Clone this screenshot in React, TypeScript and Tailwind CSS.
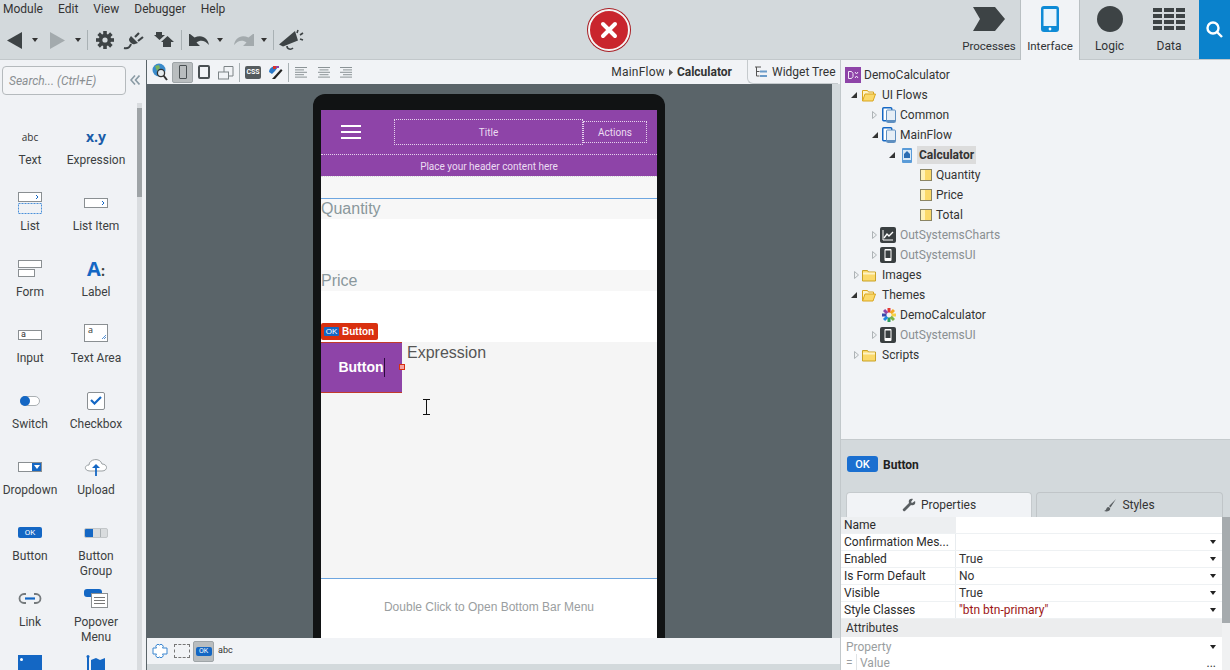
import React from "react";

const DK = "#3d4345";

const Caret = ({ c = "#333" }: { c?: string }) => (
  <svg width="6" height="4" viewBox="0 0 6 4"><path d="M0 0h6L3 4z" fill={c} /></svg>
);

const Sep = ({ h = "h-[20px]" }: { h?: string }) => <div className={`w-px bg-[#a9b1b4] ${h}`} />;

const Gear = () => (
  <svg width="18" height="18" viewBox="0 0 18 18">
    <g fill={DK}>
      <circle cx="9" cy="9" r="6.2" />
      {[0, 45, 90, 135, 180, 225, 270, 315].map((a) => (
        <rect key={a} x="7.2" y="0" width="3.6" height="4" transform={`rotate(${a} 9 9)`} />
      ))}
    </g>
    <circle cx="9" cy="9" r="2.6" fill="#d3d9dc" />
  </svg>
);

const Plug = () => (
  <svg width="22" height="19" viewBox="0 0 22 19" fill="none">
    <path d="M8 7l7 7-3 1c-2 .5-3 0-4-1s-2-2-2-4z" fill={DK} transform="translate(0 -2)" />
    <path d="M12 6l4-4M15 10l5-4" stroke={DK} strokeWidth="2.2" />
    <path d="M8 13c-1 3-3 5-7 4" stroke={DK} strokeWidth="2" />
  </svg>
);

const Merge = () => (
  <svg width="20" height="16" viewBox="0 0 20 16">
    <path d="M2 0h6v3h3L5.500 8 0 3h2z" fill={DK} />
    <path d="M13.500 4L20 10h-3v5H9v-5H7z" fill={DK} />
  </svg>
);

const Undo = ({ c = DK, flip = false }: { c?: string; flip?: boolean }) => (
  <svg width="21" height="15" viewBox="0 0 21 15" className={flip ? "-scale-x-100" : ""}>
    <path d="M0 1v12h11L7.500 9.500C11 6.500 16 7 20 12 19 5 13 1 5.500 4.500L1 1z" fill={c} />
  </svg>
);

const Mega = () => (
  <svg width="25" height="22" viewBox="0 0 25 22" fill="none">
    <path d="M0 15.500L16 2l3 9.500-15 6z" fill={DK} />
    <path d="M8 17c0 3.500 4 4 6 2" stroke={DK} strokeWidth="1.600" />
    <path d="M19 1l-1 3M21 6l3-2M21 10l3 1" stroke={DK} strokeWidth="1.600" />
  </svg>
);

const Globe = () => (
  <svg width="16" height="18" viewBox="0 0 16 18">
    <circle cx="7" cy="7" r="6.500" fill="#3a8bcc" />
    <path d="M3 3l4-1 1 3-3 3zM9 8l3 0-1 3-2 0z" fill="#7cb35a" />
    <circle cx="9" cy="10" r="3.600" fill="#e6ecef" stroke="#333" strokeWidth="1.300" />
    <path d="M11.500 12.500L15 17" stroke="#333" strokeWidth="2" />
  </svg>
);

const Align = ({ kind }: { kind: "l" | "c" | "r" }) => {
  const ws = [12, 9, 12, 9, 12];
  return (
    <svg width="12" height="11" viewBox="0 0 12 11">
      {ws.map((w, i) => (
        <rect key={i} x={kind === "l" ? 0 : kind === "c" ? (12 - w) / 2 : 12 - w} y={i * 2.4} width={w} height="1" fill="#8b9396" />
      ))}
    </svg>
  );
};

const Folder = ({ open = false }: { open?: boolean }) =>
  open ? (
    <svg width="14" height="13" viewBox="0 0 14 13">
      <path d="M.5 12V1.500h5l1 1.500h5v2" fill="#fff3c4" stroke="#d9a520" />
      <path d="M.5 12l2.500-7h10.500l-2.500 7z" fill="#fbd96a" stroke="#d9a520" />
    </svg>
  ) : (
    <svg width="14" height="13" viewBox="0 0 14 13">
      <path d="M.5 12V1.500h5l1 1.500h7v9z" fill="#fbd96a" stroke="#c9a227" />
      <rect x="1" y="3.500" width="12" height="2" fill="#fff3c4" />
    </svg>
  );

const Flow = () => (
  <svg width="14" height="16" viewBox="0 0 14 16">
    <rect x=".75" y=".75" width="9" height="13" rx="1" fill="#fff" stroke="#1467c4" strokeWidth="1.500" />
    <rect x="4.500" y="3" width="9" height="12.500" rx="1" fill="#e6eef6" stroke="#5f8fc0" />
    <rect x="5" y="13" width="8" height="2" fill="#5f8fc0" />
  </svg>
);

const ScreenIcon = () => (
  <svg width="10" height="15" viewBox="0 0 10 15">
    <rect width="10" height="15" rx="1" fill="#5a9bd8" />
    <rect x="1" y="2" width="8" height="10" fill="#d8e8f6" />
    <path d="M5 3L2 6v4h6V6z" fill="#2a6cb3" />
  </svg>
);

const Block = () => (
  <svg width="12" height="12" viewBox="0 0 12 12">
    <rect x=".5" y=".5" width="11" height="11" fill="#fbd96a" stroke="#8a8464" />
    <rect x="1" y="1" width="4" height="10" fill="#fff2b8" />
  </svg>
);

const Charts = () => (
  <svg width="16" height="16" viewBox="0 0 16 16">
    <rect width="16" height="16" rx="2" fill="#3a3f41" />
    <path d="M3 3v10h10" stroke="#fff" fill="none" />
    <path d="M4 11l3-4 2 2 4-4" stroke="#fff" strokeWidth="1.400" fill="none" />
  </svg>
);

const Mobile = () => (
  <svg width="16" height="16" viewBox="0 0 16 16">
    <rect width="16" height="16" rx="2" fill="#3a3f41" />
    <rect x="4.500" y="2" width="7" height="12" rx="1" fill="#fff" />
    <rect x="5.500" y="3.500" width="5" height="7.500" fill="#3a3f41" />
  </svg>
);

const Wheel = () => (
  <svg width="14" height="14" viewBox="0 0 14 14">
    {["#e53935", "#f5a623", "#f7d046", "#7cb342", "#2e9e5b", "#1e88e5", "#3949ab", "#8e44a8"].map((c, i) => (
      <rect key={c} x="5.500" y="0" width="3" height="4.500" fill={c} transform={`rotate(${i * 45} 7 7)`} />
    ))}
  </svg>
);

const Root = () => (
  <div className="flex h-4 w-4 items-center justify-center bg-[#8e44a8]">
    <svg width="11" height="8" viewBox="0 0 11 8" fill="none" stroke="#f3e6f8">
      <path d="M.5.5h3l1.500 2v3l-1.500 2h-3zM7 1l1.500 2L10 1M7 7l1.500-2L10 7" />
    </svg>
  </div>
);

const Arrow = ({ open }: { open?: boolean }) =>
  open ? (
    <svg width="6" height="6" viewBox="0 0 6 6"><path d="M6 0v6H0z" fill="#333" /></svg>
  ) : (
    <svg width="5" height="8" viewBox="0 0 5 8"><path d="M.5.5L4.500 4 .5 7.500z" fill="#eef0f2" stroke="#aeb3b6" /></svg>
  );

function TreeRow({ pl, aw, iw, arrow, icon, children, cls }: { pl: string; aw?: string; iw: string; arrow?: "o" | "c"; icon: React.ReactNode; children: React.ReactNode; cls?: string }) {
  return (
    <div className={`flex h-5 items-center ${pl}`}>
      {aw && <div className={`flex shrink-0 items-center ${aw}`}>{arrow && <Arrow open={arrow === "o"} />}</div>}
      <div className={`flex shrink-0 items-center ${iw}`}>{icon}</div>
      <span className={cls ?? "text-[#333]"}>{children}</span>
    </div>
  );
}

const Pal = ({ icon, label }: { icon: React.ReactNode; label: React.ReactNode }) => (
  <div className="flex h-[66px] flex-col items-center text-center text-[12px] leading-[15px] text-[#3c3f41]">
    <div className="mb-[7px] flex h-[19px] items-center justify-center">{icon}</div>
    <div>{label}</div>
  </div>
);

const boxCls = "border border-[#8a8f92] bg-white";

const palette: { icon: React.ReactNode; label: React.ReactNode }[] = [
  { icon: <span className="font-['Open_Sans',sans-serif] text-[10px] leading-none text-[#333]">abc</span>, label: "Text" },
  { icon: <span className="font-['Open_Sans',sans-serif] text-[14px] font-bold leading-none text-[#1a5ca8]">x.y</span>, label: "Expression" },
  {
    icon: (
      <svg width="24" height="22" viewBox="0 0 24 22">
        <rect x=".5" y=".5" width="23" height="9" fill="#fff" stroke="#8a8f92" />
        <path d="M18 3l2 2-2 2" stroke="#1467c4" fill="none" />
        <rect x=".5" y="11.500" width="23" height="10" fill="none" stroke="#4a90d9" strokeDasharray="2 1" />
      </svg>
    ),
    label: "List",
  },
  {
    icon: (
      <svg width="24" height="10" viewBox="0 0 24 10">
        <rect x=".5" y=".5" width="23" height="9" fill="#fff" stroke="#8a8f92" />
        <path d="M18 3l2 2-2 2" stroke="#1467c4" fill="none" />
      </svg>
    ),
    label: "List Item",
  },
  {
    icon: (
      <div className="flex flex-col gap-[1px]">
        <div className={`h-[8px] w-[24px] ${boxCls}`} />
        <div className={`h-[8px] w-[17px] ${boxCls}`} />
      </div>
    ),
    label: "Form",
  },
  {
    icon: (
      <span className="font-['Open_Sans',sans-serif] text-[20px] font-bold leading-none text-[#1467c4]">
        A<span className="text-[14px] text-[#3c3f41]">:</span>
      </span>
    ),
    label: "Label",
  },
  {
    icon: (
      <div className={`flex h-[10px] w-[24px] items-center pl-[2px] text-[9px] leading-none text-[#333] ${boxCls}`}>a</div>
    ),
    label: "Input",
  },
  {
    icon: (
      <svg width="24" height="18" viewBox="0 0 24 18" className="mb-[3px]">
        <rect x=".5" y=".5" width="23" height="17" fill="#fff" stroke="#8a8f92" />
        <text x="4" y="9" fontSize="9" fill="#333" fontFamily="Open Sans">a</text>
        <path d="M20 15l2-2M18 15l4-4" stroke="#1467c4" strokeWidth=".7" />
      </svg>
    ),
    label: "Text Area",
  },
  {
    icon: (
      <div className="flex h-[10px] w-[20px] items-center rounded-full border border-[#aab0b3] bg-white">
        <div className="ml-[-1px] h-[10px] w-[10px] rounded-full bg-[#1467c4]" />
      </div>
    ),
    label: "Switch",
  },
  {
    icon: (
      <div className="flex h-[18px] w-[18px] items-center justify-center rounded-[2px] border border-[#8a8f92] bg-white">
        <svg width="12" height="9" viewBox="0 0 12 9"><path d="M1 4l3.500 3.500L11 1" stroke="#1467c4" strokeWidth="2.200" fill="none" /></svg>
      </div>
    ),
    label: "Checkbox",
  },
  {
    icon: (
      <div className="flex h-[10px] w-[24px] border border-[#8a8f92] bg-white">
        <div className="ml-auto flex h-full w-[9px] items-center justify-center bg-[#1467c4]">
          <Caret c="#fff" />
        </div>
      </div>
    ),
    label: "Dropdown",
  },
  {
    icon: (
      <svg width="24" height="18" viewBox="0 0 24 18">
        <path d="M6 13c-6 0-6-6-1-6 0-6 11-8 13-1 6 0 6 7 0 7z" fill="#fff" stroke="#9aa0a3" />
        <path d="M12 7v11" stroke="#1467c4" strokeWidth="1.800" />
        <path d="M8 10l4-4 4 4z" fill="#1467c4" />
      </svg>
    ),
    label: "Upload",
  },
  {
    icon: (
      <div className="flex h-[11px] w-[24px] items-center justify-center rounded-[2px] bg-[#1467c4] text-[8px] leading-none text-white">OK</div>
    ),
    label: "Button",
  },
  {
    icon: (
      <div className="flex h-[10px] w-[24px] overflow-hidden rounded-[2px] border border-[#c3c7c9] bg-[#d9dcde]">
        <div className="w-[8px] bg-[#1467c4]" />
        <div className="ml-[7px] w-px bg-[#aab0b3]" />
      </div>
    ),
    label: (
      <>
        Button
        <br />
        Group
      </>
    ),
  },
  {
    icon: (
      <svg width="24" height="11" viewBox="0 0 24 11" fill="none">
        <path d="M8 1H6a4.500 4.500 0 000 9h2M16 1h2a4.500 4.500 0 010 9h-2" stroke="#757a7d" strokeWidth="1.800" />
        <path d="M7 5.500h10" stroke="#1467c4" strokeWidth="2.200" />
      </svg>
    ),
    label: "Link",
  },
  {
    icon: (
      <svg width="24" height="19" viewBox="0 0 24 19">
        <rect width="18" height="8" rx="3" fill="#1467c4" />
        <rect x="7.500" y="4.500" width="16" height="14" fill="#fff" stroke="#8a8f92" />
        <path d="M10 8.500h11M10 11.500h11M10 14.500h11" stroke="#777" />
      </svg>
    ),
    label: (
      <>
        Popover
        <br />
        Menu
      </>
    ),
  },
  {
    icon: (
      <div className="flex h-[19px] w-[24px] items-start bg-[#1467c4] pl-[2px] pt-[3px]">
        <div className="h-[3px] w-[3px] rounded-full bg-white" />
      </div>
    ),
    label: "",
  },
  {
    icon: (
      <svg width="20" height="19" viewBox="0 0 20 19">
        <path d="M1 1h2v18H1z" fill="#1467c4" />
        <circle cx="2" cy="1.500" r="1.500" fill="#1467c4" />
        <path d="M5 5l5-2 4 2 5-2v16H5z" fill="#1467c4" />
      </svg>
    ),
    label: "",
  },
];

const PropRow = ({ k, v, caret = true, red }: { k: string; v?: string; caret?: boolean; red?: boolean }) => (
  <div className="flex h-[17px] items-center border-b border-[#eef1f3] bg-white">
    <div className="w-[115px] shrink-0 truncate border-r border-[#e8ecef] pl-[3px] leading-[16px] text-[#2b2b2b]">{k}</div>
    <div className={`flex-1 pl-[3px] ${red ? "text-[#9c1515]" : "text-[#333]"}`}>{v}</div>
    {caret && (
      <div className="mr-[6px]">
        <Caret c="#222" />
      </div>
    )}
  </div>
);

export default function App() {
  return (
    <div className="relative flex h-[670px] w-[1230px] flex-col overflow-hidden bg-[#d3d9dc] font-['Roboto',sans-serif] text-[12px] text-[#2f3234]">
      {/* Top bar */}
      <div className="flex h-[60px] shrink-0 border-b border-[#c2c8cb]">
        <div className="flex-1">
          <div className="flex h-[18px] items-center gap-[15px] pl-[3px] text-[12px] text-[#333]">
            <span>Module</span>
            <span>Edit</span>
            <span>View</span>
            <span>Debugger</span>
            <span>Help</span>
          </div>
          <div className="mt-[12px] flex h-[20px] items-center">
            <svg width="15" height="17" viewBox="0 0 15 17" className="ml-[7px]"><path d="M15 0v17L0 8.500z" fill={DK} /></svg>
            <div className="ml-[10px]"><Caret /></div>
            <svg width="15" height="17" viewBox="0 0 15 17" className="ml-[12px]"><path d="M0 0v17l15-8.500z" fill="#a3aaad" /></svg>
            <div className="ml-[10px]"><Caret /></div>
            <div className="ml-[6px]"><Sep /></div>
            <div className="ml-[8px]"><Gear /></div>
            <div className="ml-[9px]"><Plug /></div>
            <div className="ml-[9px]"><Merge /></div>
            <div className="ml-[7px]"><Sep /></div>
            <div className="ml-[7px]"><Undo /></div>
            <div className="ml-[7px]"><Caret /></div>
            <div className="ml-[10px]"><Undo flip c="#a3aaad" /></div>
            <div className="ml-[7px]"><Caret /></div>
            <div className="ml-[6px]"><Sep /></div>
            <div className="ml-[5px]"><Mega /></div>
          </div>
        </div>
        <div className="flex h-[60px] text-[12px] text-[#2f3234]">
          <div className="flex w-[63px] flex-col items-center border-r border-[#b9bfc2] pt-[7px]">
            <svg width="32" height="24" viewBox="0 0 32 24"><path d="M0 0h22l10 12-10 12H0l7-12z" fill={DK} /></svg>
            <span className="mt-[8px] text-[11.500px] leading-[15px]">Processes</span>
          </div>
          <div className="flex w-[58px] flex-col items-center bg-[#f1f3f6] pt-[6px]">
            <svg width="18" height="26" viewBox="0 0 18 26">
              <rect width="18" height="26" rx="3" fill="#0f8bd6" />
              <rect x="2.500" y="3" width="13" height="17" fill="#eaf5fc" />
              <circle cx="9" cy="23" r="1.400" fill="#fff" />
            </svg>
            <span className="mt-[7px] text-[11.500px] leading-[15px]">Interface</span>
          </div>
          <div className="flex w-[60px] flex-col items-center border-l border-[#b9bfc2] pt-[6px]">
            <div className="h-[26px] w-[26px] rounded-full bg-[#3d4345]" />
            <span className="mt-[7px] leading-[15px]">Logic</span>
          </div>
          <div className="flex w-[60px] flex-col items-center pt-[8px]">
            <div className="grid h-[22px] w-[32px] grid-cols-3 gap-[2px]">
              {Array.from({ length: 12 }).map((_, i) => (
                <div key={i} className="bg-[#3d4345]" />
              ))}
            </div>
            <span className="mt-[9px] leading-[15px]">Data</span>
          </div>
          <div className="flex h-[59px] w-[31px] items-center justify-center bg-[#0a82cc]">
            <svg width="17" height="17" viewBox="0 0 17 17" fill="none" stroke="#fff" strokeWidth="2.400">
              <circle cx="7" cy="7" r="5.500" />
              <path d="M11 11l5 5" />
            </svg>
          </div>
        </div>
      </div>

      {/* Main */}
      <div className="flex min-h-0 flex-1">
        {/* Left palette */}
        <div className="flex h-[610px] w-[147px] shrink-0 flex-col border-r border-[#5a6469] bg-[#f0f2f5]">
          <div className="flex h-[43px] shrink-0 items-start pl-[2px] pt-[6px]">
            <div className="flex h-[29px] w-[124px] items-center rounded-[4px] border border-[#b5babd] bg-[#f4f5f7] pl-[6px] text-[12px] italic text-[#8a8f92]">
              Search... (Ctrl+E)
            </div>
            <svg width="10" height="10" viewBox="0 0 10 10" fill="none" stroke="#8a9ba5" strokeWidth="1.600" className="ml-[4px] mt-[9px]">
              <path d="M5 .5L1 5l4 4.500M9.500 .5L5.500 5l4 4.500" />
            </svg>
          </div>
          <div className="flex min-h-0 flex-1">
            <div className="w-[137px] shrink-0 overflow-hidden">
              <div className="grid grid-cols-[60px_72px] pt-[24px]">
                {palette.map((p, i) => (
                  <Pal key={i} icon={p.icon} label={p.label} />
                ))}
              </div>
            </div>
            <div className="h-full w-[5px] bg-[#d9dcdf] pt-[5px]">
              <div className="h-[89px] w-full bg-[#9ea3a6]" />
            </div>
          </div>
        </div>

        {/* Center */}
        <div className="flex h-[604px] min-w-0 flex-1 flex-col">
          <div className="flex h-[24px] shrink-0 items-center bg-[#f1f3f6]">
            <div className="ml-[5px]"><Globe /></div>
            <div className="ml-[4px] flex h-[21px] w-[21px] items-center justify-center rounded-[2px] border border-[#9fa5a8] bg-[#b9bdbf]">
              <div className="h-[14px] w-[8px] rounded-[1px] border-[1.500px] border-[#4a5053]" />
            </div>
            <div className="ml-[5px] h-[14px] w-[12px] rounded-[2px] border-2 border-[#4a5053]" />
            <svg width="16" height="15" viewBox="0 0 16 15" fill="none" stroke="#7c8386" className="ml-[8px]">
              <rect x=".5" y="7" width="10" height="7" />
              <path d="M6 7V1.500h9V11h-4" />
            </svg>
            <div className="ml-[5px]"><Sep h="h-[19px]" /></div>
            <div className="ml-[5px] flex h-[13px] w-[16px] items-center justify-center rounded-[2px] bg-[#555b5e] text-[7px] font-bold leading-none text-white">CSS</div>
            <svg width="15" height="15" viewBox="0 0 15 15" className="ml-[7px]">
              <path d="M1 7a6 6 0 0 1 9-5L7 6 4 9z" fill="#2a78c8" />
              <path d="M5 1h3v3H5z" fill="#d9342b" />
              <path d="M8 1h3v2H8z" fill="#8e44a8" />
              <path d="M4 14l9-10 1.500 1.500L7 14z" fill="#222" />
            </svg>
            <div className="ml-[5px]"><Sep h="h-[19px]" /></div>
            <div className="ml-[6px]"><Align kind="l" /></div>
            <div className="ml-[11px]"><Align kind="c" /></div>
            <div className="ml-[10px]"><Align kind="r" /></div>
            <div className="ml-auto flex items-center whitespace-nowrap pr-[15px] text-[#333]">
              <span className="tracking-[0.2px]">MainFlow</span>
              <svg width="4" height="7" viewBox="0 0 4 7" className="mx-[4px]"><path d="M0 0l4 3.500L0 7z" fill="#555" /></svg>
              <span className="font-bold">Calculator</span>
            </div>
            <div className="mr-[2px] flex h-[24px] w-[91px] items-center whitespace-nowrap rounded-bl-[6px] border-b border-l border-[#c5cacd] bg-[#f1f3f6] pl-[6px] text-[#333]">
              <svg width="13" height="12" viewBox="0 0 13 12" className="mr-[5px] shrink-0" fill="none">
                <path d="M1 1h6M2.500 1v9h3M2.500 5.500h3" stroke="#555" />
                <rect x="6" y="4.500" width="7" height="2" fill="#6a9bc9" />
                <rect x="6" y="9" width="7" height="2" fill="#6a9bc9" />
              </svg>
              Widget Tree
            </div>
          </div>

          <div className="flex min-h-0 flex-1">
            <div className="flex min-w-0 flex-1 justify-center overflow-hidden bg-[#5a6469] pt-[10px]">
              <div className="mr-[1px] flex w-[352px] flex-col rounded-t-[12px] bg-[#111314] px-[8px] pt-[16px]">
                <div className="flex min-h-0 flex-1 flex-col font-['Liberation_Sans',sans-serif]">
                  {/* App header */}
                  <div className="flex h-[66px] shrink-0 flex-col bg-[#8e44a8] font-['Roboto',sans-serif] text-[#ecdcf2]">
                    <div className="flex h-[44px] shrink-0 items-center">
                      <div className="ml-[20px] flex w-[20px] flex-col gap-[4px]">
                        <div className="h-[2px] bg-white" />
                        <div className="h-[2px] bg-white" />
                        <div className="h-[2px] bg-white" />
                      </div>
                      <div className="ml-[33px] flex h-[26px] w-[189px] items-center justify-center border border-dotted border-[#e6d3ee] text-[10px]">Title</div>
                      <div className="flex h-[22px] w-[64px] items-center justify-center border border-dotted border-[#e6d3ee] text-[10px]">Actions</div>
                    </div>
                    <div className="flex flex-1 items-center justify-center border-t border-dotted border-[#e6d3ee] pt-[1px] text-[10px]">
                      Place your header content here
                    </div>
                  </div>
                  <div className="h-[22px] shrink-0 border-t border-dotted border-[#d8d8d8] bg-[#f7f7f7]" />
                  <div className="h-[1px] shrink-0 bg-[#6ea6e0]" />
                  <div className="flex h-[20px] shrink-0 items-center bg-[#f7f7f7] text-[16px] leading-[20px] text-[#8a979c]">Quantity</div>
                  <div className="h-[51px] shrink-0 bg-white" />
                  <div className="flex h-[21px] shrink-0 items-center bg-[#f7f7f7] text-[16px] leading-[20px] text-[#8a979c]">Price</div>
                  <div className="h-[51px] shrink-0 bg-white" />
                  <div className="relative flex h-[236px] shrink-0 bg-[#f5f5f5]">
                    <div className="absolute left-0 top-[-19px] flex h-[17px] w-[57px] items-center rounded-[2px] bg-[#d9300f] pl-[3px] text-[10px] font-bold text-white">
                      <span className="mr-[3px] flex h-[9px] w-[15px] items-center justify-center rounded-[1px] bg-[#1467c4] text-[8px] font-normal leading-none text-white">OK</span>
                      Button
                    </div>
                    <div className="relative flex h-[51px] w-[81px] items-center justify-center border-y border-[#c23b2a] bg-[#8e44a8] text-[14px] font-bold text-white">
                      <span>Button</span>
                      <span className="h-[19px] w-[1px] bg-[#2b0a3d]" />
                      <span className="absolute right-[-3px] top-[21px] h-[6px] w-[6px] border border-[#d9300f] bg-[#f5a2a2]" />
                    </div>
                    <div className="pl-[5px] pt-[2px] text-[16px] leading-[18px] text-[#555]">Expression</div>
                    <svg width="9" height="16" viewBox="0 0 9 16" className="absolute left-[101px] top-[57px]" fill="none" stroke="#111">
                      <path d="M1 .5h7M1 15.500h7M4.500 .5v15" />
                    </svg>
                  </div>
                  <div className="h-[1px] shrink-0 bg-[#6ea6e0]" />
                  <div className="flex flex-1 items-center justify-center bg-white pb-[4px] text-[12px] text-[#9a9ea0]">
                    Double Click to Open Bottom Bar Menu
                  </div>
                </div>
              </div>
            </div>
            <div className="w-[8px] shrink-0 bg-[#d3d9dc]" />
          </div>

          <div className="flex h-[26px] shrink-0 items-center bg-[#f1f3f6]">
            <svg width="16" height="14" viewBox="0 0 16 14" className="ml-[5px]" fill="#fff" stroke="#3a86d0">
              <path d="M1 4h3.500a2 2 0 0 1 3 -3 2 2 0 0 1 3 3H15v6h-4.500a2 2 0 0 1-3 3 2 2 0 0 1-3-3H1z" />
            </svg>
            <div className="ml-[6px] h-[14px] w-[16px] border border-dashed border-[#777]" />
            <div className="ml-[3px] flex h-[21px] w-[21px] items-center justify-center rounded-[2px] border border-[#9fa5a8] bg-[#b9bdbf]">
              <div className="flex h-[9px] w-[16px] items-center justify-center rounded-[2px] bg-[#1467c4] text-[7px] leading-none text-white">OK</div>
            </div>
            <span className="ml-[4px] text-[9px] text-[#333]">abc</span>
          </div>
        </div>

        {/* Right panel */}
        <div className="flex w-[390px] shrink-0 flex-col border-l border-[#c2c8cb]">
          <div className="h-[380px] shrink-0 border-b border-[#c5cacd] bg-[#f1f3f6] pt-[5px] text-[12px]">
            <TreeRow pl="pl-[4px]" iw="w-[19px]" icon={<Root />}>DemoCalculator</TreeRow>
            <TreeRow pl="pl-[10px]" aw="w-[11px]" iw="w-[20px]" arrow="o" icon={<Folder open />}>UI Flows</TreeRow>
            <TreeRow pl="pl-[31px]" aw="w-[10px]" iw="w-[18px]" arrow="c" icon={<Flow />}>Common</TreeRow>
            <TreeRow pl="pl-[31px]" aw="w-[10px]" iw="w-[18px]" arrow="o" icon={<Flow />}>MainFlow</TreeRow>
            <TreeRow pl="pl-[48px]" aw="w-[13px]" iw="w-[15px]" arrow="o" icon={<ScreenIcon />} cls="bg-[#dcdcdc] px-[2px] font-bold text-[#333]">Calculator</TreeRow>
            <TreeRow pl="pl-[79px]" iw="w-[16px]" icon={<Block />}>Quantity</TreeRow>
            <TreeRow pl="pl-[79px]" iw="w-[16px]" icon={<Block />}>Price</TreeRow>
            <TreeRow pl="pl-[79px]" iw="w-[16px]" icon={<Block />}>Total</TreeRow>
            <TreeRow pl="pl-[31px]" aw="w-[8px]" iw="w-[20px]" arrow="c" icon={<Charts />} cls="text-[#8a8f92]">OutSystemsCharts</TreeRow>
            <TreeRow pl="pl-[31px]" aw="w-[8px]" iw="w-[20px]" arrow="c" icon={<Mobile />} cls="text-[#8a8f92]">OutSystemsUI</TreeRow>
            <TreeRow pl="pl-[13px]" aw="w-[8px]" iw="w-[20px]" arrow="c" icon={<Folder />}>Images</TreeRow>
            <TreeRow pl="pl-[10px]" aw="w-[11px]" iw="w-[20px]" arrow="o" icon={<Folder open />}>Themes</TreeRow>
            <TreeRow pl="pl-[41px]" iw="w-[18px]" icon={<Wheel />}>DemoCalculator</TreeRow>
            <TreeRow pl="pl-[31px]" aw="w-[8px]" iw="w-[20px]" arrow="c" icon={<Mobile />} cls="text-[#8a8f92]">OutSystemsUI</TreeRow>
            <TreeRow pl="pl-[13px]" aw="w-[8px]" iw="w-[20px]" arrow="c" icon={<Folder />}>Scripts</TreeRow>
          </div>
          <div className="flex h-[52px] shrink-0 items-start pl-[6px] pt-[16px]">
            <div className="flex h-[16px] w-[31px] items-center justify-center rounded-[3px] bg-[#1a6fd0] text-[11px] font-medium leading-none text-white">OK</div>
            <span className="ml-[5px] font-bold text-[#222]">Button</span>
          </div>
          <div className="flex h-[25px] shrink-0 gap-[4px] pl-[5px]">
            <div className="flex h-[25px] w-[186px] items-center justify-center gap-[5px] rounded-t-[4px] border border-b-0 border-[#c5cacd] bg-[#f1f3f6] text-[#333]">
              <svg width="14" height="14" viewBox="0 0 14 14"><path d="M13 3l-3 2-1-1 2-3c-3-1-5 1-4 4L1 11c-1 1 1 3 2 2l6-6c3 1 5-1 4-4z" fill="#5a5f62" /></svg>
              Properties
            </div>
            <div className="flex h-[25px] w-[187px] items-center justify-center gap-[5px] rounded-t-[4px] border border-b-0 border-[#c0c5c8] bg-[#d3d9dc] text-[#333]">
              <svg width="13" height="13" viewBox="0 0 13 13"><path d="M12 0L5 7l1.500 1.500zM4.500 8C2 8 3 11 0 12c3 1 7 0 6-3z" fill="#5a5f62" /></svg>
              Styles
            </div>
          </div>
          <div className="flex min-h-0 flex-1 overflow-hidden bg-white">
            <div className="min-w-0 flex-1">
              <div className="flex h-[17px] items-center border-b border-[#eef1f3]">
                <div className="w-[115px] bg-[#edeff1] pl-[3px] leading-[16px] text-[#2b2b2b]">Name</div>
              </div>
              <PropRow k="Confirmation Mes..." />
              <PropRow k="Enabled" v="True" />
              <PropRow k="Is Form Default" v="No" />
              <PropRow k="Visible" v="True" />
              <PropRow k="Style Classes" v={'"btn btn-primary"'} red />
              <div className="flex h-[18px] items-center bg-[#ecedee] pl-[5px] text-[#333]">Attributes</div>
              <div className="flex h-[17px] items-center pl-[5px] pr-[6px] pt-[2px] text-[#9a9ea0]">
                <span className="flex-1">Property</span>
                <Caret c="#222" />
              </div>
              <div className="flex h-[17px] items-center pl-[5px] pr-[6px] pt-[1px] text-[#9a9ea0]">
                <span className="w-[11px] border-r border-[#e0e3e5]">=</span>
                <span className="flex-1 pl-[3px]">Value</span>
                <span className="text-[#333]">...</span>
              </div>
            </div>
            <div className="w-[8px] shrink-0 bg-[#f0f1f2]">
              <div className="h-[106px] w-full bg-[#a6abae]" />
            </div>
          </div>
        </div>
      </div>

      {/* Error badge over the page */}
      <div className="absolute left-[588px] top-[9px] flex h-[42px] w-[42px] items-center justify-center rounded-full border-2 border-[#f4f4f4] bg-[#c9252d] shadow-[0_0_0_1px_#a81c22]">
        <svg width="18" height="18" viewBox="0 0 18 18" stroke="#fff" strokeWidth="4" strokeLinecap="round">
          <path d="M3 3l12 12M15 3L3 15" />
        </svg>
      </div>
    </div>
  );
}
